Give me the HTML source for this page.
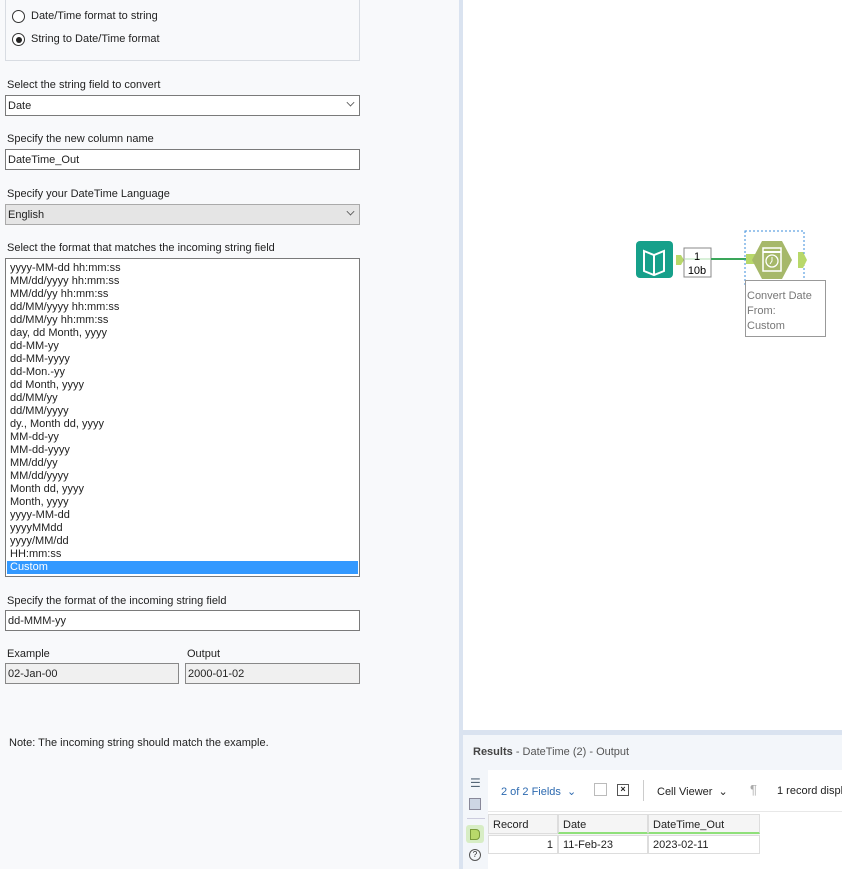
<!DOCTYPE html><html><head><style>
*{margin:0;padding:0;box-sizing:border-box}
body{width:842px;height:869px;position:relative;overflow:hidden;background:#fff;font-family:"Liberation Sans",sans-serif;font-size:11px;color:#222}
.a{position:absolute}
.lbl{position:absolute;left:7px;font-size:11px;color:#222;margin-top:2px}
.box{position:absolute;left:5px;width:355px;height:21px;border:1px solid #7a7a7a;background:#fff;padding:4px 2px 0;font-size:11px}
.chev{position:absolute;right:5px;top:3px;width:7px;height:7px;border-right:1px solid #555;border-bottom:1px solid #555;transform:rotate(45deg) scale(.8)}
.list div{height:13px;line-height:13px;padding-left:3px;font-size:11px}
</style></head><body>
<div class="a" style="left:0;top:0;width:459px;height:869px;background:#f8f9fb"></div>
<div class="a" style="left:459px;top:0;width:4px;height:869px;background:#dae3f0"></div>
<div class="a" style="left:5px;top:-2px;width:355px;height:63px;border:1px solid #d8dce2"></div>
<div class="a" style="left:12px;top:10px;width:13px;height:13px;border:1px solid #333;border-radius:50%;background:#fff"></div>
<div class="a" style="left:31px;top:10px;font-size:11px">Date/Time format to string</div>
<div class="a" style="left:12px;top:33px;width:13px;height:13px;border:1px solid #333;border-radius:50%;background:#fff"><div class="a" style="left:2.5px;top:2.5px;width:6px;height:6px;border-radius:50%;background:#222"></div></div>
<div class="a" style="left:31px;top:33px">String to Date/Time format</div>
<div class="lbl" style="top:77px">Select the string field to convert</div>
<div class="box" style="top:95px">Date<span class="chev"></span></div>
<div class="lbl" style="top:131px">Specify the new column name</div>
<div class="box" style="top:149px">DateTime_Out</div>
<div class="lbl" style="top:186px">Specify your DateTime Language</div>
<div class="box" style="top:204px;background:#e5e5e5;border-color:#aaa">English<span class="chev"></span></div>
<div class="lbl" style="top:240px">Select the format that matches the incoming string field</div>
<div class="box list" style="top:258px;height:319px;padding:3px 1px">
<div>yyyy-MM-dd hh:mm:ss</div><div>MM/dd/yyyy hh:mm:ss</div><div>MM/dd/yy hh:mm:ss</div><div>dd/MM/yyyy hh:mm:ss</div><div>dd/MM/yy hh:mm:ss</div><div>day, dd Month, yyyy</div><div>dd-MM-yy</div><div>dd-MM-yyyy</div><div>dd-Mon.-yy</div><div>dd Month, yyyy</div><div>dd/MM/yy</div><div>dd/MM/yyyy</div><div>dy., Month dd, yyyy</div><div>MM-dd-yy</div><div>MM-dd-yyyy</div><div>MM/dd/yy</div><div>MM/dd/yyyy</div><div>Month dd, yyyy</div><div>Month, yyyy</div><div>yyyy-MM-dd</div><div>yyyyMMdd</div><div>yyyy/MM/dd</div><div>HH:mm:ss</div><div style="background:#3399ff;color:#fff">Custom</div>
</div>
<div class="lbl" style="top:593px">Specify the format of the incoming string field</div>
<div class="box" style="top:610px">dd-MMM-yy</div>
<div class="lbl" style="top:646px">Example</div>
<div class="a" style="left:187px;top:648px">Output</div>
<div class="box" style="top:663px;width:174px;background:#f0f0f0;border-color:#888">02-Jan-00</div>
<div class="box" style="top:663px;left:185px;width:175px;background:#f0f0f0;border-color:#888">2000-01-02</div>
<div class="lbl" style="top:735px;left:9px">Note: The incoming string should match the example.</div>

<svg class="a" style="left:630px;top:225px" width="200" height="115">
<rect x="6" y="16" width="37" height="37" rx="4" fill="#16a08a"/>
<path d="M14 26 L24 30 L34 26 L34 46 L24 50 L14 46 Z" fill="none" stroke="#fff" stroke-width="2"/>
<line x1="24" y1="30" x2="24" y2="50" stroke="#fff" stroke-width="2"/>
<path d="M46 30 h5 l3 5 l-3 5 h-5z" fill="#b8d86a"/>
<rect x="54" y="23" width="27" height="29" fill="#fff" stroke="#888"/>
<line x1="55" y1="34" x2="80" y2="34" stroke="#d8f0d8" stroke-width="2"/>
<text x="67" y="35" font-size="11" text-anchor="middle" font-family="Liberation Sans">1</text>
<text x="67" y="49" font-size="11" text-anchor="middle" font-family="Liberation Sans">10b</text>
<line x1="81" y1="34" x2="117" y2="34" stroke="#3aa65a" stroke-width="2"/>
<rect x="115" y="6" width="59" height="54" fill="none" stroke="#3b8ddb" stroke-dasharray="2,2"/>
<path d="M116 29 h9 v10 h-9z" fill="#b8d86a"/>
<polygon points="132,16 152,16 162,35 152,54 132,54 122,35" fill="#a6b86a"/>
<rect x="133" y="23" width="18" height="23" fill="none" stroke="#fff" stroke-width="1.5"/>
<line x1="133" y1="27" x2="151" y2="27" stroke="#fff" stroke-width="2"/>
<circle cx="142" cy="36" r="6" fill="none" stroke="#fff" stroke-width="1.3"/>
<path d="M142 32 v4 l-2 3" stroke="#fff" fill="none"/>
<path d="M168 27 h5 l4 8 l-4 8 h-5z" fill="#b8d86a"/>
<rect x="115.5" y="55.5" width="80" height="56" fill="#fff" stroke="#999"/>
<text x="117" y="74" font-size="11" fill="#777" font-family="Liberation Sans">Convert Date</text>
<text x="117" y="89" font-size="11" fill="#777" font-family="Liberation Sans">From:</text>
<text x="117" y="104" font-size="11" fill="#777" font-family="Liberation Sans">Custom</text>
</svg>

<div class="a" style="left:463px;top:730px;width:379px;height:5px;background:#dae3f0"></div>
<div class="a" style="left:463px;top:735px;width:379px;height:134px;background:#f3f6fa"></div>
<div class="a" style="left:473px;top:746px;color:#444"><b style="font-weight:bold">Results</b> <span style="color:#555">- DateTime (2) - Output</span></div>
<div class="a" style="left:488px;top:770px;width:354px;height:99px;background:#fff"></div>
<div class="a" style="left:488px;top:811px;width:354px;height:1px;background:#e8e8e8"></div>
<div class="a" style="left:470px;top:776px;color:#567;font-size:12px">☰</div>
<div class="a" style="left:469px;top:798px;width:12px;height:12px;background:#cdd6e4;border:1px solid #889"></div>
<div class="a" style="left:467px;top:818px;width:18px;height:1px;background:#ccd"></div>
<div class="a" style="left:466px;top:825px;width:18px;height:18px;background:#d7edc5;border-radius:3px"></div>
<div class="a" style="left:470px;top:829px;width:10px;height:11px;background:#b8d86a;border:1px solid #7a9a3a;border-radius:0 4px 4px 0"></div>
<div class="a" style="left:469px;top:849px;width:12px;height:12px;border:1px solid #555;border-radius:50%;font-size:8px;text-align:center;line-height:10px">?</div>
<div class="a" style="left:501px;top:785px;color:#2d6ab0">2 of 2 Fields &nbsp;⌄</div>
<div class="a" style="left:594px;top:783px;width:13px;height:13px;border:1px solid #bbb"></div>
<div class="a" style="left:617px;top:784px;width:12px;height:12px;border:1.5px solid #555;font-size:9px;text-align:center;line-height:9px;font-weight:bold">×</div>
<div class="a" style="left:643px;top:780px;width:1px;height:21px;background:#ccc"></div>
<div class="a" style="left:657px;top:785px">Cell Viewer &nbsp;⌄</div>
<div class="a" style="left:750px;top:782px;color:#aaa;font-size:13px">¶</div>
<div class="a" style="left:777px;top:785px;white-space:nowrap">1 record displayed</div>
<div class="a" style="left:488px;top:814px;width:272px;height:40px;background:#f5f5f5"></div>
<div class="a" style="left:488px;top:814px;width:70px;height:20px;border:1px solid #ddd;padding:4px 4px 0">Record</div>
<div class="a" style="left:558px;top:814px;width:90px;height:20px;border:1px solid #ddd;border-bottom:2px solid #8fe07a;padding:4px 4px 0">Date</div>
<div class="a" style="left:648px;top:814px;width:112px;height:20px;border:1px solid #ddd;border-bottom:2px solid #8fe07a;padding:4px 4px 0">DateTime_Out</div>
<div class="a" style="left:488px;top:835px;width:70px;height:19px;border:1px solid #ddd;background:#fff;padding:3px 4px;text-align:right">1</div>
<div class="a" style="left:558px;top:835px;width:90px;height:19px;border:1px solid #ddd;background:#fff;padding:3px 4px">11-Feb-23</div>
<div class="a" style="left:648px;top:835px;width:112px;height:19px;border:1px solid #ddd;background:#fff;padding:3px 4px">2023-02-11</div>
</body></html>
